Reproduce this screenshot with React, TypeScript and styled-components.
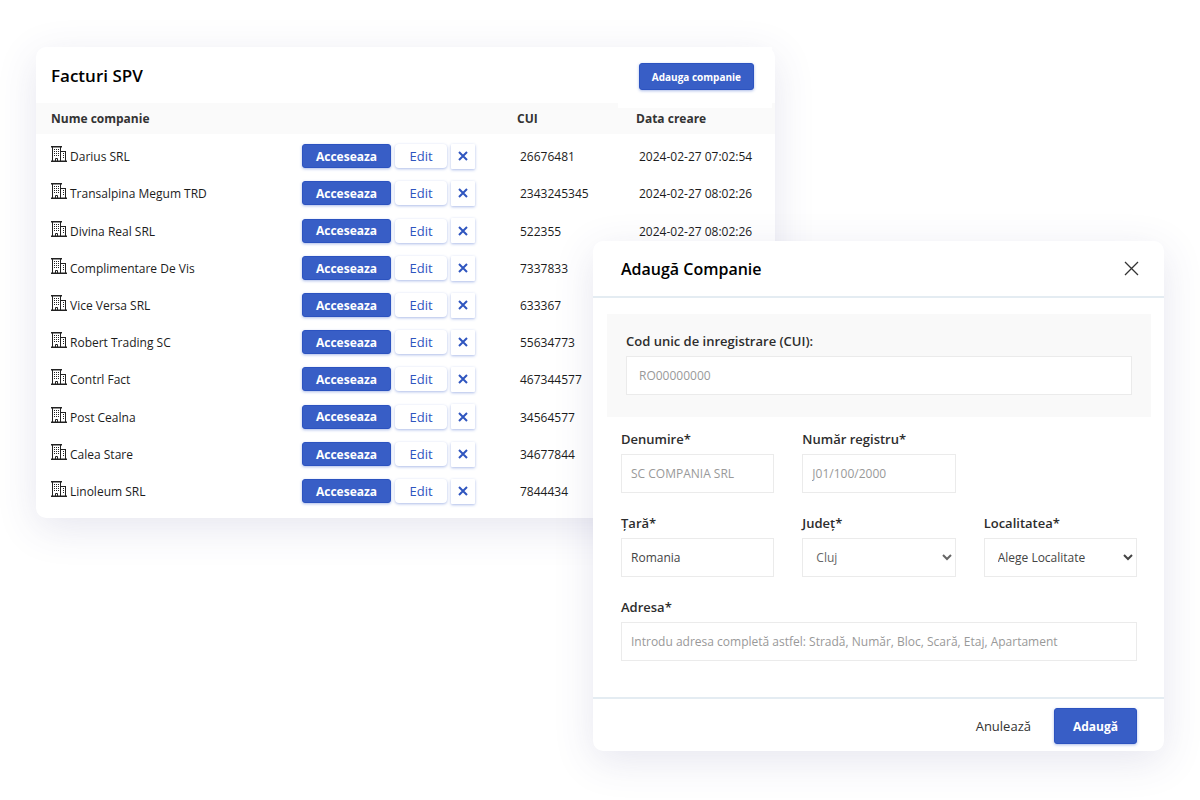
import React from "react";
import styled, { createGlobalStyle } from "styled-components";

const GlobalStyle = createGlobalStyle`
  *, *::before, *::after { box-sizing: border-box; }
  body { margin: 0; background: #fff; }
  body, button, input, select { font-family: "Open Sans", "Liberation Sans", sans-serif; }
`;

const Stage = styled.main`
  display: grid;
  grid-template-columns: 557fr 182fr 389fr;
  align-items: start;
  padding: 47px 36px;
`;

const Card = styled.section`
  grid-row: 1;
  background: #fff;
  border-radius: 10px;
  box-shadow: 0 10px 40px rgba(60, 60, 130, 0.13);
`;

const ListCard = styled(Card)`
  grid-column: 1 / 3;
  padding-bottom: 9px;
`;

const DialogCard = styled(Card)`
  grid-column: 2 / 4;
  margin-top: 194px;
  z-index: 1;
`;

const ListHeader = styled.header`
  display: flex;
  justify-content: space-between;
  align-items: flex-start;
  height: 56px;
  padding: 0 3px 0 15px;
`;

const Title = styled.h2`
  margin: 0;
  font-size: 16px;
  line-height: 24px;
  font-weight: 600;
  color: #000;
`;

const ListTitle = styled(Title)`
  padding-top: 17px;
  font-size: 17px;
`;

const HeaderAction = styled.div`
  position: relative;
  padding: 16px 18px 18px 21px;
  background: #fff;
`;

type ButtonProps = {
  $variant?: "primary" | "light" | "plain";
  $size?: "small" | "medium" | "large";
};

const heights = { small: 27, medium: 24, large: 36 };
const paddings = { small: 12, medium: 13, large: 18 };

const Button = styled.button<ButtonProps>`
  display: flex;
  align-items: center;
  justify-content: center;
  height: ${(p) => heights[p.$size ?? "medium"]}px;
  padding: 0 ${(p) => paddings[p.$size ?? "medium"]}px;
  border: 1px solid ${(p) => (p.$variant === "primary" ? "#2c53c0" : "transparent")};
  border-radius: 3px;
  background: ${(p) => (p.$variant === "primary" ? "#385ec6" : "#fff")};
  color: ${(p) => (p.$variant === "primary" ? "#fff" : p.$variant === "light" ? "#2f55bf" : "#333")};
  box-shadow: ${(p) => (p.$variant === "plain" ? "none" : "0 1px 3px rgba(48, 88, 200, 0.4)")};
  font-size: ${(p) => (p.$size === "small" ? 10 : p.$variant === "primary" ? 12 : 13)}px;
  font-weight: ${(p) => (p.$variant === "primary" ? 700 : 500)};
  cursor: pointer;
`;

const EditButton = styled(Button)`
  width: 52px;
  padding: 0;
  border-radius: 4px;
`;

const RemoveButton = styled(Button)`
  width: 24px;
  height: 25px;
  padding: 0;
  border-radius: 1px;
`;

const Actions = styled.div`
  display: flex;
  align-items: center;
  gap: 4px;
`;

const Table = styled.table`
  width: 100%;
  table-layout: fixed;
  border-collapse: collapse;
  font-size: 12px;
  color: #1c1c1c;

  tbody::before {
    content: "";
    display: table-row;
    height: 3px;
  }
`;

const Col = styled.col<{ $width?: number }>`
  width: ${(p) => (p.$width ? `${p.$width}px` : "auto")};
`;

const HeadCell = styled.th`
  height: 31px;
  padding: 0;
  background: #fafafa;
  color: #333;
  font-size: 12px;
  font-weight: 700;
  text-align: left;

  &:first-child { padding-left: 15px; }
`;

const Row = styled.tr`
  height: 37px;
  &:nth-child(5n + 3) { height: 38px; }
`;

const Cell = styled.td`
  padding: 2px 0 0 3px;
  white-space: nowrap;
  &:first-child { padding-left: 15px; }
  &:nth-child(2) { padding: 1px 0 0; }
`;

const Company = styled.span`
  display: flex;
  align-items: center;
  gap: 3px;

  svg { margin-bottom: 5px; }
`;

const DialogHeader = styled.header`
  display: flex;
  align-items: center;
  justify-content: space-between;
  height: 57px;
  padding: 0 25px 0 28px;
  border-bottom: 2px solid #e4ecf2;
`;

const CloseButton = styled.button`
  display: flex;
  padding: 0;
  border: 0;
  background: none;
  cursor: pointer;
`;

const DialogBody = styled.div`
  padding: 16px 13px 36px 14px;
`;

const CodeBox = styled.div`
  padding: 17px 19px 22px;
  background: #f9f9f9;
`;

const Fields = styled.div`
  display: grid;
  grid-template-columns: repeat(3, 1fr);
  gap: 20px 28px;
  padding: 12px 14px 0;
`;

const Field = styled.div<{ $column?: string }>`
  display: flex;
  flex-direction: column;
  gap: 5px;
  min-width: 0;
  grid-column: ${(p) => p.$column ?? "auto"};
`;

const Label = styled.label`
  font-size: 13px;
  line-height: 20px;
  font-weight: 600;
  color: #2d2d2d;
`;

const TextInput = styled.input<{ $inset?: number }>`
  width: 100%;
  height: 39px;
  padding: 0 ${(p) => p.$inset ?? 9}px 1px;
  border: 1px solid #ebebeb;
  background: #fff;
  color: #444;
  font-size: 12px;

  &::placeholder { color: #999; opacity: 1; }
`;

const Select = styled.select<{ $muted?: boolean }>`
  width: 100%;
  height: 39px;
  padding: 0 9px 1px;
  border: 1px solid #ebebeb;
  border-radius: 0;
  background: #fff;
  color: ${(p) => (p.$muted ? "#666" : "#444")};
  font-size: 12px;
`;

const DialogFooter = styled.footer`
  display: flex;
  align-items: center;
  justify-content: flex-end;
  gap: 4px;
  height: 54px;
  padding: 2px 27px 0;
  border-top: 2px solid #e4ecf2;
`;

function BuildingIcon() {
  return (
    <svg width="16" height="16" viewBox="0 0 16 16" fill="none" stroke="#222" aria-hidden="true">
      <path d="M1.500 15V1M9.500 1v14M14.500 5v10M10 5.500h5" />
      <path d="M0 .75h11M0 15.250h16" strokeWidth="1.500" />
      <path d="M4.500 15v-2.500h2V15" />
      <path d="M3 3.500h1M5 3.500h1M7 3.500h1M3 5.500h1M5 5.500h1M7 5.500h1M3 7.500h1M5 7.500h1M7 7.500h1M3 9.500h1M5 9.500h1M7 9.500h1M12 7.500h1M12 9.500h1M12 11.500h1" />
    </svg>
  );
}

const companies = [
  { name: "Darius SRL", cui: "26676481", created: "2024-02-27 07:02:54" },
  { name: "Transalpina Megum TRD", cui: "2343245345", created: "2024-02-27 08:02:26" },
  { name: "Divina Real SRL", cui: "522355", created: "2024-02-27 08:02:26" },
  { name: "Complimentare De Vis", cui: "7337833", created: "" },
  { name: "Vice Versa SRL", cui: "633367", created: "" },
  { name: "Robert Trading SC", cui: "55634773", created: "" },
  { name: "Contrl Fact", cui: "467344577", created: "" },
  { name: "Post Cealna", cui: "34564577", created: "" },
  { name: "Calea Stare", cui: "34677844", created: "" },
  { name: "Linoleum SRL", cui: "7844434", created: "" },
];

export default function App() {
  return (
    <>
      <GlobalStyle />
      <Stage>
        <ListCard>
          <ListHeader>
            <ListTitle>Facturi SPV</ListTitle>
            <HeaderAction>
              <Button type="button" $variant="primary" $size="small">Adauga companie</Button>
            </HeaderAction>
          </ListHeader>
          <Table>
            <colgroup>
              <Col />
              <Col $width={215} />
              <Col $width={119} />
              <Col $width={139} />
            </colgroup>
            <thead>
              <tr>
                <HeadCell scope="col">Nume companie</HeadCell>
                <HeadCell />
                <HeadCell scope="col">CUI</HeadCell>
                <HeadCell scope="col">Data creare</HeadCell>
              </tr>
            </thead>
            <tbody>
              {companies.map((c) => (
                <Row key={c.name}>
                  <Cell>
                    <Company>
                      <BuildingIcon />
                      {c.name}
                    </Company>
                  </Cell>
                  <Cell>
                    <Actions>
                      <Button type="button" $variant="primary">Acceseaza</Button>
                      <EditButton type="button" $variant="light">Edit</EditButton>
                      <RemoveButton type="button" $variant="light" aria-label="Sterge">
                        <svg width="10" height="10" viewBox="0 0 10 10" stroke="currentColor" strokeWidth="2" aria-hidden="true">
                          <path d="M1 1l8 8M9 1l-8 8" />
                        </svg>
                      </RemoveButton>
                    </Actions>
                  </Cell>
                  <Cell>{c.cui}</Cell>
                  <Cell>{c.created}</Cell>
                </Row>
              ))}
            </tbody>
          </Table>
        </ListCard>

        <DialogCard as="form" role="dialog" aria-labelledby="dialog-title">
          <DialogHeader>
            <Title id="dialog-title">Adaugă Companie</Title>
            <CloseButton type="button" aria-label="Închide">
              <svg width="15" height="15" viewBox="0 0 15 15" stroke="#333" strokeWidth="1.3" aria-hidden="true">
                <path d="M1 1l13 13M14 1l-13 13" />
              </svg>
            </CloseButton>
          </DialogHeader>
          <DialogBody>
            <CodeBox>
              <Field>
                <Label htmlFor="cui">Cod unic de inregistrare (CUI):</Label>
                <TextInput id="cui" $inset={12} placeholder="RO00000000" />
              </Field>
            </CodeBox>
            <Fields>
              <Field>
                <Label htmlFor="name">Denumire*</Label>
                <TextInput id="name" placeholder="SC COMPANIA SRL" />
              </Field>
              <Field $column="2">
                <Label htmlFor="registry">Număr registru*</Label>
                <TextInput id="registry" placeholder="J01/100/2000" />
              </Field>
              <Field $column="1">
                <Label htmlFor="country">Țară*</Label>
                <TextInput id="country" defaultValue="Romania" />
              </Field>
              <Field>
                <Label htmlFor="county">Județ*</Label>
                <Select id="county" $muted defaultValue="Cluj">
                  <option>Cluj</option>
                </Select>
              </Field>
              <Field>
                <Label htmlFor="city">Localitatea*</Label>
                <Select id="city" defaultValue="Alege Localitate">
                  <option>Alege Localitate</option>
                </Select>
              </Field>
              <Field $column="1 / -1">
                <Label htmlFor="address">Adresa*</Label>
                <TextInput id="address" placeholder="Introdu adresa completă astfel: Stradă, Număr, Bloc, Scară, Etaj, Apartament" />
              </Field>
            </Fields>
          </DialogBody>
          <DialogFooter>
            <Button type="button" $variant="plain" $size="large">Anulează</Button>
            <Button type="button" $variant="primary" $size="large">Adaugă</Button>
          </DialogFooter>
        </DialogCard>
      </Stage>
    </>
  );
}
